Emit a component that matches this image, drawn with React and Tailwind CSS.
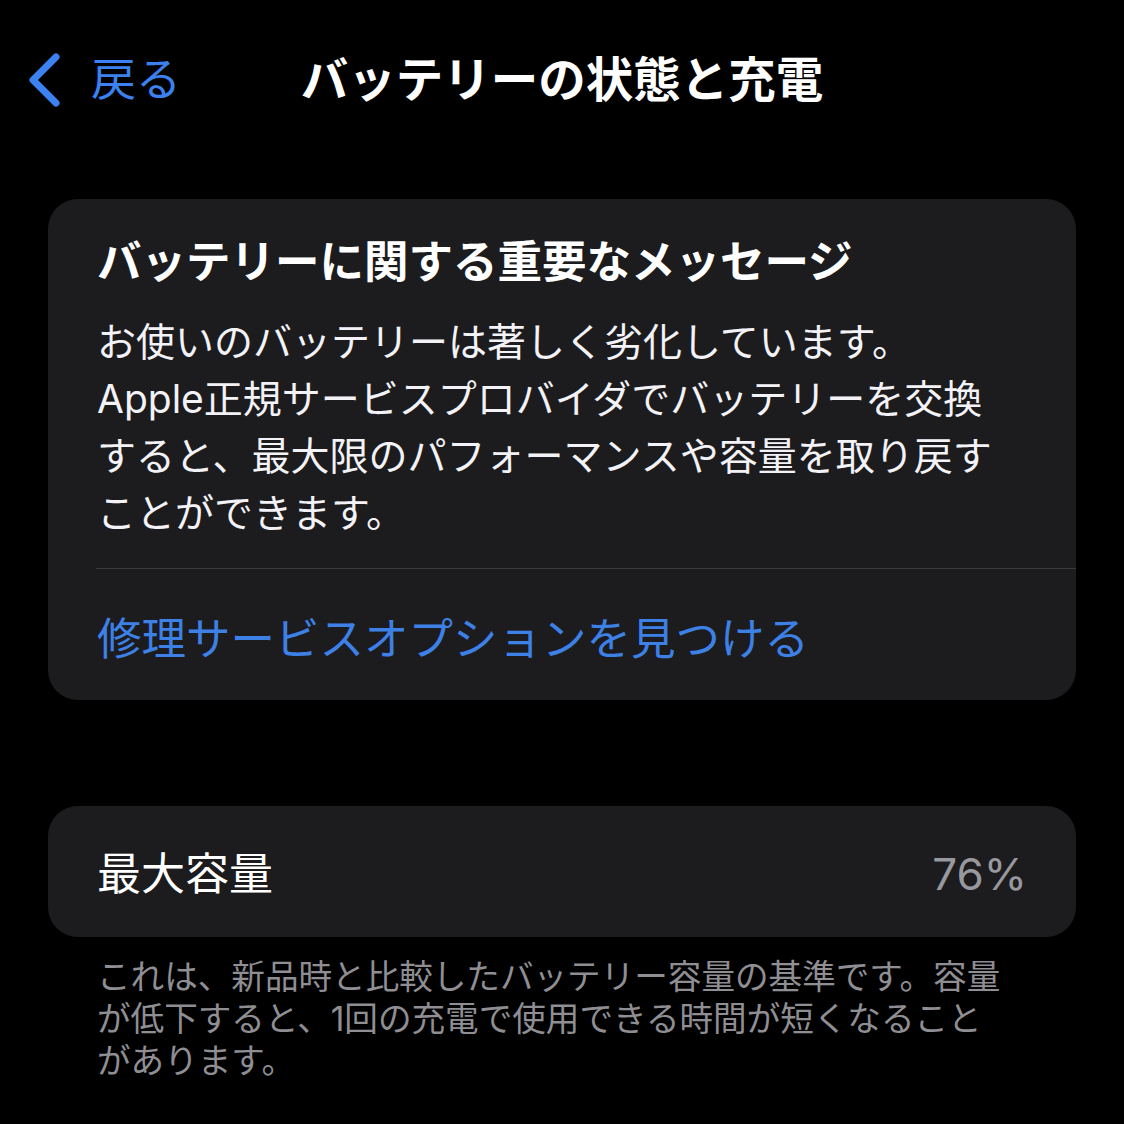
export default function App() {
  return (
    <div
      className="min-h-[1124px] w-[1124px] bg-black text-white"
      style={{ fontFamily: '"Inter", "Noto Sans CJK JP", sans-serif' }}
    >
      <header className="relative flex h-[160px] items-center justify-center">
        <div className="absolute left-[27px] top-[53px] flex items-center gap-[30px] text-[#3b82f0]">
          <svg width="34" height="54" viewBox="0 0 34 54" fill="none">
            <path
              d="M29 4 L6 27 L29 50"
              stroke="currentColor"
              strokeWidth="7"
              strokeLinecap="round"
              strokeLinejoin="round"
            />
          </svg>
          <span className="text-[45px] leading-[54px]">戻る</span>
        </div>
        <h1 className="text-[47.5px] font-bold leading-[54px]">バッテリーの状態と充電</h1>
      </header>

      <div className="px-[48px] pt-[39px]">
        <section className="rounded-[30px] bg-[#1c1c1e] pt-[36px]">
          <div className="px-[49px]">
            <h2 className="text-[44.5px] font-bold leading-[54px]">
              バッテリーに関する重要なメッセージ
            </h2>
            <p className="mt-[24px] text-[39px] leading-[57px] text-[#f2f2f7]">
              お使いのバッテリーは著しく劣化しています。
              <br />
              Apple正規サービスプロバイダでバッテリーを交換
              <br />
              すると、最大限のパフォーマンスや容量を取り戻す
              <br />
              ことができます。
            </p>
          </div>
          <div className="ml-[48px] mt-[27px] h-px bg-[#3a3a3c]" />
          <div className="flex h-[131px] items-center px-[49px] pt-[8px]">
            <span className="text-[44.5px] leading-[54px] text-[#3d80e6]">
              修理サービスオプションを見つける
            </span>
          </div>
        </section>

        <section className="mt-[106px] flex h-[131px] items-center justify-between rounded-[30px] bg-[#1c1c1e] px-[49px] pt-[4px]">
          <span className="text-[44px] leading-[54px]">最大容量</span>
          <span className="text-[44px] leading-[54px] text-[#98989f]">76%</span>
        </section>

        <p className="mt-[19px] px-[49px] text-[33.6px] leading-[42px] text-[#8e8e93]">
          これは、新品時と比較したバッテリー容量の基準です。容量
          <br />
          が低下すると、1回の充電で使用できる時間が短くなること
          <br />
          があります。
        </p>
      </div>
    </div>
  );
}
